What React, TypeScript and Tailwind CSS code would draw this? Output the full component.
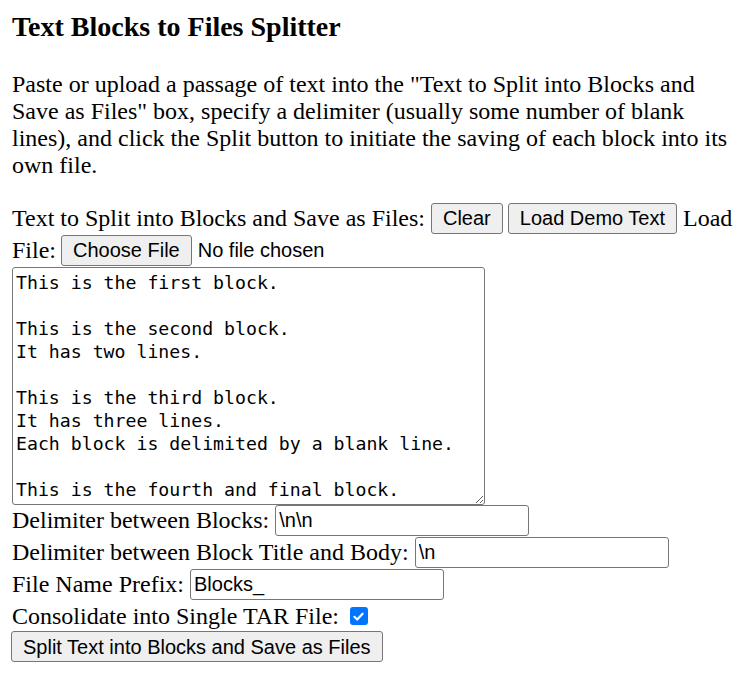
const demo = `This is the first block.

This is the second block.
It has two lines.

This is the third block.
It has three lines.
Each block is delimited by a blank line.

This is the fourth and final block.`;

const btn =
  "h-[31px] rounded-[3px] border border-[#767676] bg-[#efefef] px-[11px] font-['Liberation_Sans',Arial,sans-serif] text-[20px] leading-none text-black";

const field =
  "h-[31px] w-[254px] rounded-[3px] border border-[#767676] bg-white px-[3px] font-['Liberation_Sans',Arial,sans-serif] text-[20px] text-black outline-none";

function Row({ label, value }: { label: string; value: string }) {
  return (
    <div className="flex h-[32px] items-start whitespace-nowrap">
      <span className="mr-[6px] leading-[31px]">{label}</span>
      <input className={field} defaultValue={value} />
    </div>
  );
}

export default function App() {
  return (
    <div className="min-h-screen bg-white px-[12px] pt-[11px] font-['Liberation_Serif','Times_New_Roman',serif] text-[24px] text-black">
      <h1 className="text-[28px] font-bold leading-[32px]">Text Blocks to Files Splitter</h1>
      <p className="mt-[28px] leading-[27px]">
        Paste or upload a passage of text into the "Text to Split into Blocks and
        <br />
        Save as Files" box, specify a delimiter (usually some number of blank
        <br />
        lines), and click the Split button to initiate the saving of each block into its
        <br />
        own file.
      </p>

      <div className="mt-[23px] flex h-[32px] items-center whitespace-nowrap">
        <span>Text to Split into Blocks and Save as Files:</span>
        <button className={`${btn} ml-[6px]`}>Clear</button>
        <button className={`${btn} ml-[5px]`}>Load Demo Text</button>
        <span className="ml-[6px]">Load</span>
      </div>
      <div className="flex h-[32px] items-center whitespace-nowrap">
        <span>File:</span>
        <button className={`${btn} ml-[5px] h-[30px]`}>Choose File</button>
        <span className="ml-[6px] font-['Liberation_Sans',Arial,sans-serif] text-[20px]">No file chosen</span>
      </div>

      <textarea
        className="mt-[1px] block h-[238px] w-[473px] overflow-hidden rounded-[3px] border border-[#767676] px-[3px] py-[3px] font-['DejaVu_Sans_Mono',monospace] text-[18.2px] leading-[23px] text-black outline-none"
        defaultValue={demo}
        spellCheck={false}
      />

      <Row label="Delimiter between Blocks:" value="\n\n" />
      <Row label="Delimiter between Block Title and Body:" value="\n" />
      <Row label="File Name Prefix:" value="Blocks_" />

      <div className="flex h-[30px] items-center whitespace-nowrap">
        <span>Consolidate into Single TAR File:</span>
        <span className="ml-[11px] flex h-[18px] w-[18px] items-center justify-center rounded-[3px] bg-[#0075ff]">
          <svg viewBox="0 0 12 12" className="h-[13px] w-[13px]">
            <path d="M2.2 6.3 L4.8 8.8 L9.8 3.4" fill="none" stroke="white" strokeWidth="2" strokeLinecap="round" strokeLinejoin="round" />
          </svg>
        </span>
      </div>
      <div className="flex">
        <button className={`${btn} -ml-[1px]`}>Split Text into Blocks and Save as Files</button>
      </div>
    </div>
  );
}
